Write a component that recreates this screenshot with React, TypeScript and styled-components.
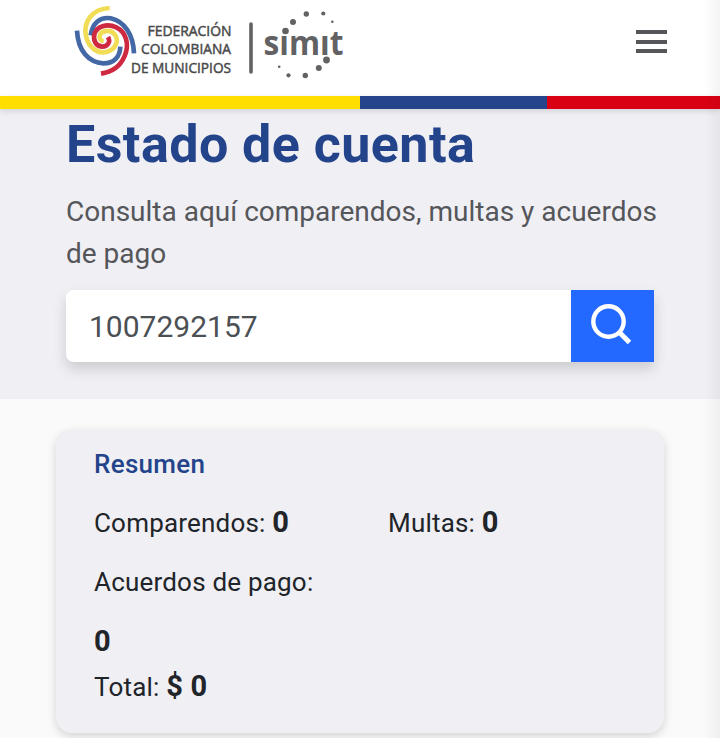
import React from "react";
import styled, { createGlobalStyle } from "styled-components";

const GlobalStyle = createGlobalStyle`
  * { box-sizing: border-box; }
  body { margin: 0; background: #fafafa; font-family: Roboto, sans-serif; color: #212429; }
  h1, h2, p { margin: 0; }
`;

const Page = styled.div`
  position: relative;
  height: 738px;
  overflow: hidden;
`;

const EdgeShade = styled.div`
  position: absolute;
  inset: 0 0 0 auto;
  width: 16px;
  background: linear-gradient(to right, rgba(0, 0, 0, 0), rgba(0, 0, 0, 0.045));
  pointer-events: none;
`;

const Header = styled.header`
  position: relative;
  display: flex;
  justify-content: space-between;
  height: 96px;
  padding: 0 53px 0 70px;
  background: #fff;
`;

const Brand = styled.svg`
  display: block;
  width: 280px;
  height: 84px;
`;

const MenuButton = styled.button`
  display: flex;
  flex-direction: column;
  justify-content: space-between;
  width: 31px;
  height: 23px;
  margin-top: 30px;
  padding: 0;
  border: 0;
  background: none;
`;

const MenuLine = styled.span`
  height: 4px;
  background: #55565a;
`;

const FlagBar = styled.div`
  position: relative;
  display: grid;
  grid-template-columns: 360px 187px 1fr;
  height: 13px;
  box-shadow: 0 2px 6px rgba(0, 0, 0, 0.13);
`;

const FlagBand = styled.span<{ $color: string }>`
  background: ${(p) => p.$color};
`;

const Hero = styled.section`
  height: 290px;
  padding: 5px 62px 0 66px;
  background: #efeff4;
`;

const Title = styled.h1`
  color: #23448a;
  font-size: 52px;
  line-height: 62px;
  font-weight: 700;
  letter-spacing: 0.45px;
`;

const Intro = styled.p`
  margin-top: 15px;
  color: #55565a;
  font-size: 28px;
  line-height: 42px;
  white-space: nowrap;
`;

const SearchForm = styled.div`
  display: flex;
  width: 588px;
  height: 72px;
  margin-top: 15px;
  border-radius: 8px 0 0 8px;
  box-shadow: 0 7px 14px rgba(0, 0, 0, 0.15);
`;

const SearchInput = styled.input`
  width: 505px;
  padding: 0 23px;
  border: 0;
  border-radius: 8px 0 0 8px;
  outline: 0;
  background: #fff;
  color: #4c4f54;
  font: 400 30px Roboto, sans-serif;
`;

const SearchButton = styled.button`
  width: 83px;
  padding: 0;
  border: 0;
  background: #2369ff;
  svg { display: block; }
`;

const Card = styled.section`
  width: 608px;
  height: 303px;
  margin: 31px 0 0 56px;
  padding: 14px 38px;
  border-radius: 16px;
  background: #efeff4;
  box-shadow: 0 3px 10px rgba(0, 0, 0, 0.16);
`;

const CardTitle = styled.h2`
  color: #23448a;
  font-size: 26px;
  line-height: 40px;
  font-weight: 500;
  letter-spacing: 0.3px;
`;

const Summary = styled.div`
  display: grid;
  grid-template-columns: 294px 1fr;
  margin-top: 9px;
`;

const Stat = styled.p`
  font-size: 26px;
  line-height: 59px;
  letter-spacing: 0.2px;
  white-space: nowrap;
`;

const StatBlock = styled.div`
  display: flex;
  flex-direction: column;
`;

const Total = styled(Stat)`
  line-height: 42px;
  margin-top: -7px;
`;

const Value = styled.strong`
  font-size: 29px;
  font-weight: 700;
`;

const Logo = () => (
  <Brand viewBox="70 0 280 84" role="img" aria-label="Federación Colombiana de Municipios, Simit">
    <g transform="translate(70 0) scale(0.3333)" fill="none" strokeWidth="14">
      <path stroke="#f0dc55" d="M119 24C66 27 39 65 48 108C56 145 84 161 109 156C136 150 149 122 134 103C121 87 91 91 89 109C88 118 93 123 101 123" />
      <path stroke="#4468a6" d="M21 92C24 153 56 188 100 190C132 190 150 170 151 140" />
      <path stroke="#4468a6" d="M62 106C67 70 91 49 122 55C164 64 190 105 192 160" />
      <path stroke="#cf2942" d="M114 111C123 126 112 141 96 140C77 138 69 121 73 103C79 79 111 69 139 82C168 96 180 133 163 170C151 198 128 216 93 221" />
    </g>
    <g fill="#4a4a4b" stroke="#4a4a4b" strokeWidth="0.5" fontFamily="Open Sans, sans-serif" fontSize="14.5">
      <text x="147.5" y="36" textLength="84" lengthAdjust="spacingAndGlyphs">FEDERACIÓN</text>
      <text x="141" y="54" textLength="90" lengthAdjust="spacingAndGlyphs">COLOMBIANA</text>
      <text x="131" y="73" textLength="100" lengthAdjust="spacingAndGlyphs">DE MUNICIPIOS</text>
    </g>
    <path d="M251 24V72" stroke="#626264" strokeWidth="3.6" strokeLinecap="round" />
    <g fill="#626264">
      <text x="263.5" y="55" fontFamily="Open Sans, sans-serif" fontWeight="700" fontSize="34" textLength="80" lengthAdjust="spacingAndGlyphs">sımıt</text>
      <circle cx="285.5" cy="31" r="3.3" />
      <circle cx="293" cy="22" r="3" />
      <circle cx="306.3" cy="14" r="2.7" />
      <circle cx="323.3" cy="13.5" r="2.1" />
      <circle cx="332.3" cy="21.7" r="1.3" />
      <circle cx="326.5" cy="60" r="3.4" />
      <circle cx="318.8" cy="68" r="3" />
      <circle cx="305.3" cy="75.5" r="2.7" />
      <circle cx="288.5" cy="75.3" r="2.1" />
      <circle cx="279.2" cy="66.7" r="1.3" />
    </g>
  </Brand>
);

export default function App() {
  return (
    <Page>
      <GlobalStyle />
      <Header>
        <Logo />
        <MenuButton aria-label="Menú">
          <MenuLine />
          <MenuLine />
          <MenuLine />
        </MenuButton>
      </Header>
      <FlagBar>
        <FlagBand $color="#ffde00" />
        <FlagBand $color="#25448a" />
        <FlagBand $color="#d90013" />
      </FlagBar>
      <Hero>
        <Title>Estado de cuenta</Title>
        <Intro>
          Consulta aquí comparendos, multas y acuerdos
          <br />
          de pago
        </Intro>
        <SearchForm>
          <SearchInput defaultValue="1007292157" aria-label="Documento" />
          <SearchButton aria-label="Buscar">
            <svg width="83" height="72" viewBox="571 290 83 72" fill="none" stroke="#fff">
              <circle cx="608.5" cy="321.5" r="15.2" strokeWidth="4.4" />
              <path d="M619 332L629.5 342.5" strokeWidth="5" />
            </svg>
          </SearchButton>
        </SearchForm>
      </Hero>
      <Card>
        <CardTitle>Resumen</CardTitle>
        <Summary>
          <StatBlock>
            <Stat>Comparendos: <Value>0</Value></Stat>
            <Stat>Acuerdos de pago:</Stat>
            <Stat><Value>0</Value></Stat>
          </StatBlock>
          <Stat>Multas: <Value>0</Value></Stat>
        </Summary>
        <Total>Total: <Value>$ 0</Value></Total>
      </Card>
      <EdgeShade />
    </Page>
  );
}
